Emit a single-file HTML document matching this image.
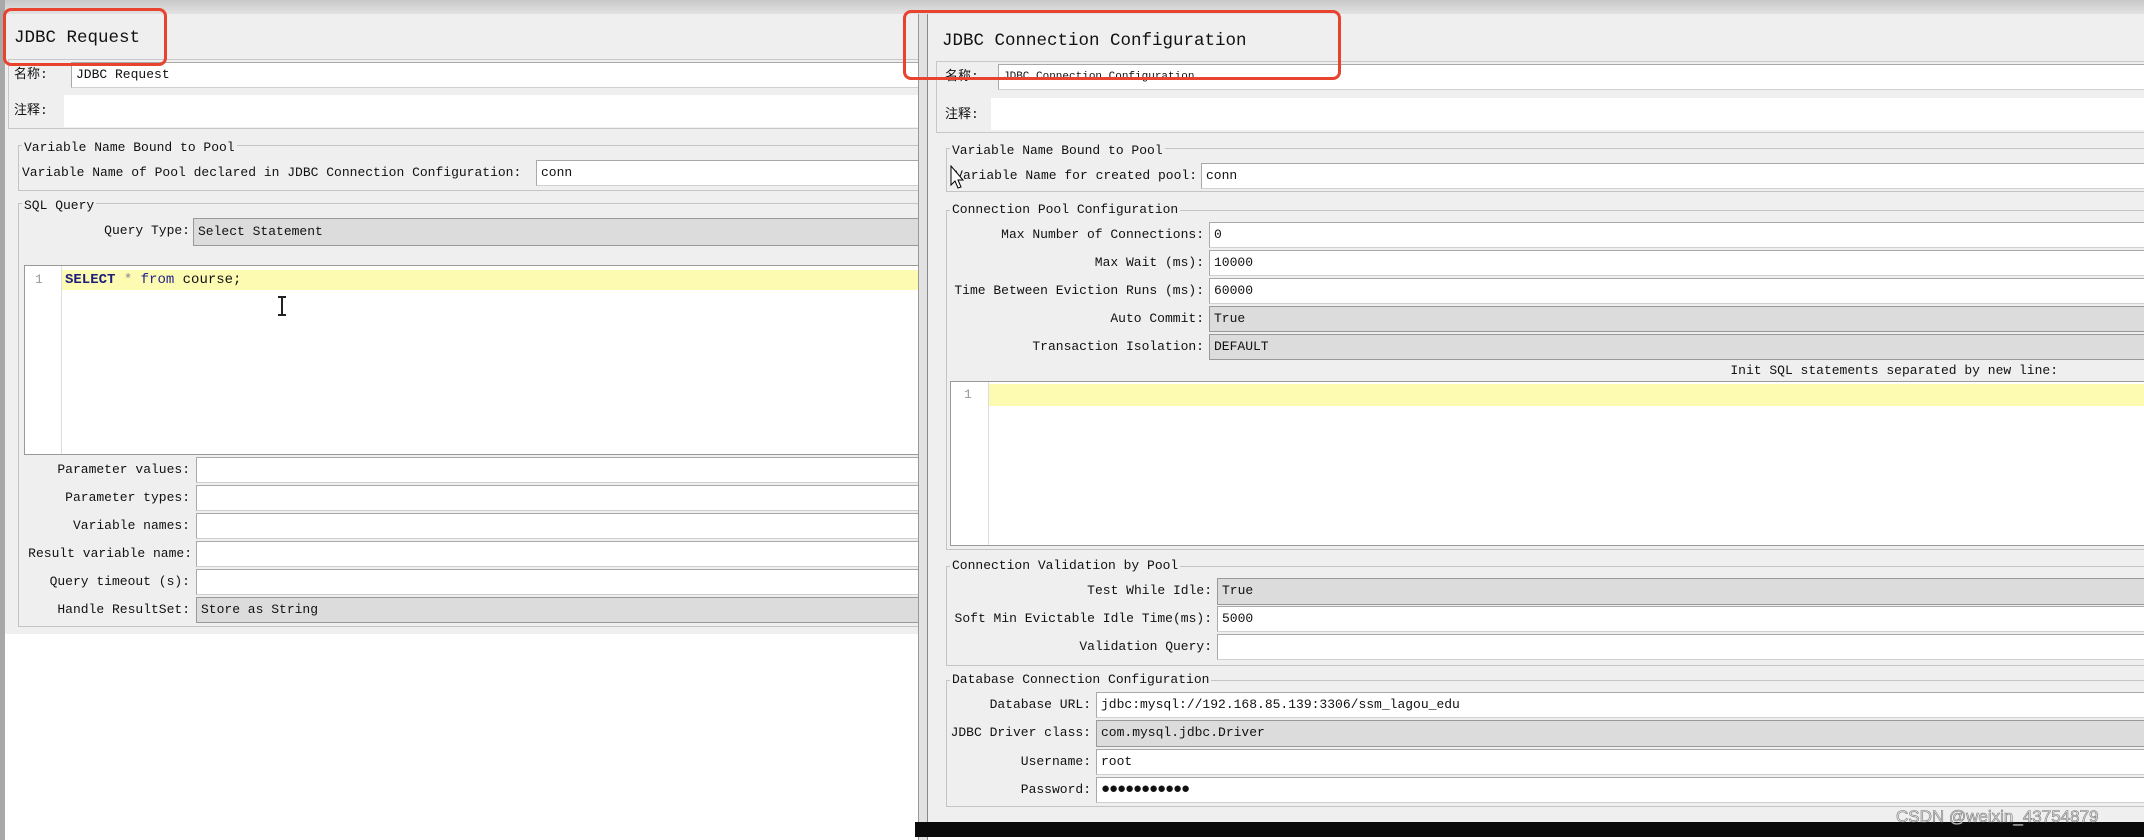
<!DOCTYPE html>
<html><head><meta charset="utf-8"><style>
*{box-sizing:border-box;margin:0;padding:0}
body{width:2144px;height:840px;position:relative;overflow:hidden;background:#fff;font-family:"Liberation Mono","Noto Sans CJK SC",monospace;font-size:13px;color:#111}
.a{position:absolute}
.in{position:absolute;background:#fff;border:1px solid #a9a9a9;border-bottom-color:#d0d0d0;border-right:none;padding-left:4px;line-height:24px;white-space:nowrap}
.sel{background:#dcdcdc;border-color:#999}
.lb{position:absolute;text-align:right;white-space:nowrap;line-height:26px}
.fs{position:absolute;border:1px solid #c4c4c4;border-right:none}
.lg{position:absolute;background:#efefef;padding:0 2px;line-height:14px;white-space:nowrap}
.t{position:absolute;font-size:17.5px;white-space:nowrap}
</style></head><body>
<div class="a" style="left:0;top:0;width:2144px;height:15px;background:linear-gradient(#c8c8c8,#e4e4e4)"></div>
<div class="a" style="left:0;top:14px;width:920px;height:620px;background:#efefef"></div>
<div class="a" style="left:0;top:0;width:5px;height:840px;background:#a8a8a8"></div>
<div class="t" style="left:14px;top:28px">JDBC Request</div>
<div class="a" style="left:8px;top:59px;width:912px;height:70px;border:1px solid #c8c8c8;border-right:none"></div>
<div class="lb" style="left:14px;top:62px">名称:</div>
<div class="in" style="left:71px;top:62px;width:849px;height:26px">JDBC Request</div>
<div class="lb" style="left:14px;top:98px">注释:</div>
<div class="in" style="left:64px;top:95px;width:856px;height:32px;border:none"></div>

<div class="fs" style="left:18px;top:145px;width:902px;height:46px"></div>
<div class="lg" style="left:22px;top:141px">Variable Name Bound to Pool</div>
<div class="lb" style="left:22px;top:160px">Variable Name of Pool declared in JDBC Connection Configuration:</div>
<div class="in" style="left:536px;top:160px;width:384px;height:26px">conn</div>

<div class="fs" style="left:18px;top:203px;width:902px;height:424px"></div>
<div class="lg" style="left:22px;top:199px">SQL Query</div>
<div class="lb" style="left:40px;top:218px;width:150px">Query Type:</div>
<div class="in sel" style="left:193px;top:218px;width:727px;height:28px;line-height:26px">Select Statement</div>
<div class="a" style="left:24px;top:265px;width:896px;height:190px;background:#fff;border:1px solid #999;border-right:none"></div>
<div class="a" style="left:61px;top:266px;width:1px;height:188px;background:#ddd"></div>
<div class="a" style="left:62px;top:270px;width:858px;height:20px;background:#fdfbb2"></div>
<div class="a" style="left:35px;top:271px;color:#999;line-height:18px">1</div>
<div class="a" style="left:65px;top:271px;line-height:18px;font-size:14px;white-space:pre"><b style="color:#1d1d7a">SELECT</b> <span style="color:#888">*</span> <span style="color:#24248a">from</span> course;</div>
<div class="a" style="left:281px;top:296px;width:2px;height:20px;background:#222"></div>
<div class="a" style="left:278px;top:296px;width:8px;height:2px;background:#222"></div>
<div class="a" style="left:278px;top:314px;width:8px;height:2px;background:#222"></div>

<div class="lb" style="left:20px;top:457px;width:170px">Parameter values:</div><div class="in" style="left:196px;top:457px;width:724px;height:26px"></div>
<div class="lb" style="left:20px;top:485px;width:170px">Parameter types:</div><div class="in" style="left:196px;top:485px;width:724px;height:26px"></div>
<div class="lb" style="left:20px;top:513px;width:170px">Variable names:</div><div class="in" style="left:196px;top:513px;width:724px;height:26px"></div>
<div class="lb" style="left:20px;top:541px;width:172px">Result variable name:</div><div class="in" style="left:196px;top:541px;width:724px;height:26px"></div>
<div class="lb" style="left:20px;top:569px;width:170px">Query timeout (s):</div><div class="in" style="left:196px;top:569px;width:724px;height:26px"></div>
<div class="lb" style="left:20px;top:597px;width:170px">Handle ResultSet:</div><div class="in sel" style="left:196px;top:597px;width:724px;height:26px">Store as String</div>

<div class="a" style="left:918px;top:14px;width:10px;height:826px;background:#e2e2e2;border-left:1px solid #999;border-right:1px solid #888"></div>

<div class="a" style="left:928px;top:14px;width:1216px;height:808px;background:#efefef"></div>
<div class="t" style="left:942px;top:31px">JDBC Connection Configuration</div>
<div class="a" style="left:936px;top:61px;width:1208px;height:72px;border:1px solid #c8c8c8;border-right:none"></div>
<div class="lb" style="left:945px;top:64px">名称:</div>
<div class="in" style="left:998px;top:64px;width:1146px;height:26px;font-size:11px">JDBC Connection Configuration</div>
<div class="lb" style="left:945px;top:102px">注释:</div>
<div class="in" style="left:991px;top:98px;width:1153px;height:32px;border:none"></div>

<div class="fs" style="left:946px;top:148px;width:1198px;height:44px"></div>
<div class="lg" style="left:950px;top:144px">Variable Name Bound to Pool</div>
<div class="lb" style="left:950px;top:163px;width:247px">Variable Name for created pool:</div>
<div class="in" style="left:1201px;top:163px;width:943px;height:26px">conn</div>
<svg class="a" style="left:950px;top:165px" width="16" height="26" viewBox="0 0 16 26"><path d="M1 1 L1 20 L5 16 L8 23 L11 22 L8 15 L13 15 Z" fill="#fff" stroke="#000" stroke-width="1"/></svg>

<div class="fs" style="left:946px;top:210px;width:1198px;height:340px"></div>
<div class="lg" style="left:950px;top:203px">Connection Pool Configuration</div>
<div class="lb" style="left:950px;top:222px;width:254px">Max Number of Connections:</div><div class="in" style="left:1209px;top:222px;width:935px;height:26px">0</div>
<div class="lb" style="left:950px;top:250px;width:254px">Max Wait (ms):</div><div class="in" style="left:1209px;top:250px;width:935px;height:26px">10000</div>
<div class="lb" style="left:948px;top:278px;width:256px">Time Between Eviction Runs (ms):</div><div class="in" style="left:1209px;top:278px;width:935px;height:26px">60000</div>
<div class="lb" style="left:950px;top:306px;width:254px">Auto Commit:</div><div class="in sel" style="left:1209px;top:306px;width:935px;height:26px">True</div>
<div class="lb" style="left:950px;top:334px;width:254px">Transaction Isolation:</div><div class="in sel" style="left:1209px;top:334px;width:935px;height:26px">DEFAULT</div>
<div class="lb" style="left:1720px;top:358px;width:338px">Init SQL statements separated by new line:</div>
<div class="a" style="left:950px;top:381px;width:1194px;height:165px;background:#fff;border:1px solid #999;border-right:none"></div>
<div class="a" style="left:988px;top:382px;width:1px;height:163px;background:#ddd"></div>
<div class="a" style="left:989px;top:384px;width:1155px;height:22px;background:#fdfbb2"></div>
<div class="a" style="left:964px;top:386px;color:#999;line-height:18px">1</div>

<div class="fs" style="left:946px;top:566px;width:1198px;height:100px"></div>
<div class="lg" style="left:950px;top:559px">Connection Validation by Pool</div>
<div class="lb" style="left:948px;top:578px;width:264px">Test While Idle:</div><div class="in sel" style="left:1217px;top:578px;width:927px;height:27px">True</div>
<div class="lb" style="left:948px;top:606px;width:264px">Soft Min Evictable Idle Time(ms):</div><div class="in" style="left:1217px;top:606px;width:927px;height:26px">5000</div>
<div class="lb" style="left:948px;top:634px;width:264px">Validation Query:</div><div class="in" style="left:1217px;top:634px;width:927px;height:26px"></div>

<div class="fs" style="left:946px;top:680px;width:1198px;height:127px"></div>
<div class="lg" style="left:950px;top:673px">Database Connection Configuration</div>
<div class="lb" style="left:948px;top:692px;width:143px">Database URL:</div><div class="in" style="left:1096px;top:692px;width:1048px;height:26px">jdbc:mysql://192.168.85.139:3306/ssm_lagou_edu</div>
<div class="lb" style="left:948px;top:720px;width:143px">JDBC Driver class:</div><div class="in sel" style="left:1096px;top:720px;width:1048px;height:27px">com.mysql.jdbc.Driver</div>
<div class="lb" style="left:948px;top:749px;width:143px">Username:</div><div class="in" style="left:1096px;top:749px;width:1048px;height:26px">root</div>
<div class="lb" style="left:948px;top:777px;width:143px">Password:</div><div class="in" style="left:1096px;top:777px;width:1048px;height:26px;font-size:15px;letter-spacing:-1px">●●●●●●●●●●●</div>

<div class="a" style="left:3px;top:8px;width:164px;height:58px;border:3px solid #e8432e;border-radius:8px"></div>
<div class="a" style="left:903px;top:10px;width:438px;height:70px;border:3px solid #e8432e;border-radius:8px"></div>

<div class="a" style="left:915px;top:822px;width:1229px;height:15px;background:#0a0a0a"></div>
<div class="a" style="left:1896px;top:807px;font-family:'Liberation Sans',sans-serif;font-size:17px;color:#e8e8e8;-webkit-text-stroke:0.6px #777;white-space:nowrap">CSDN @weixin_43754879</div>
</body></html>
